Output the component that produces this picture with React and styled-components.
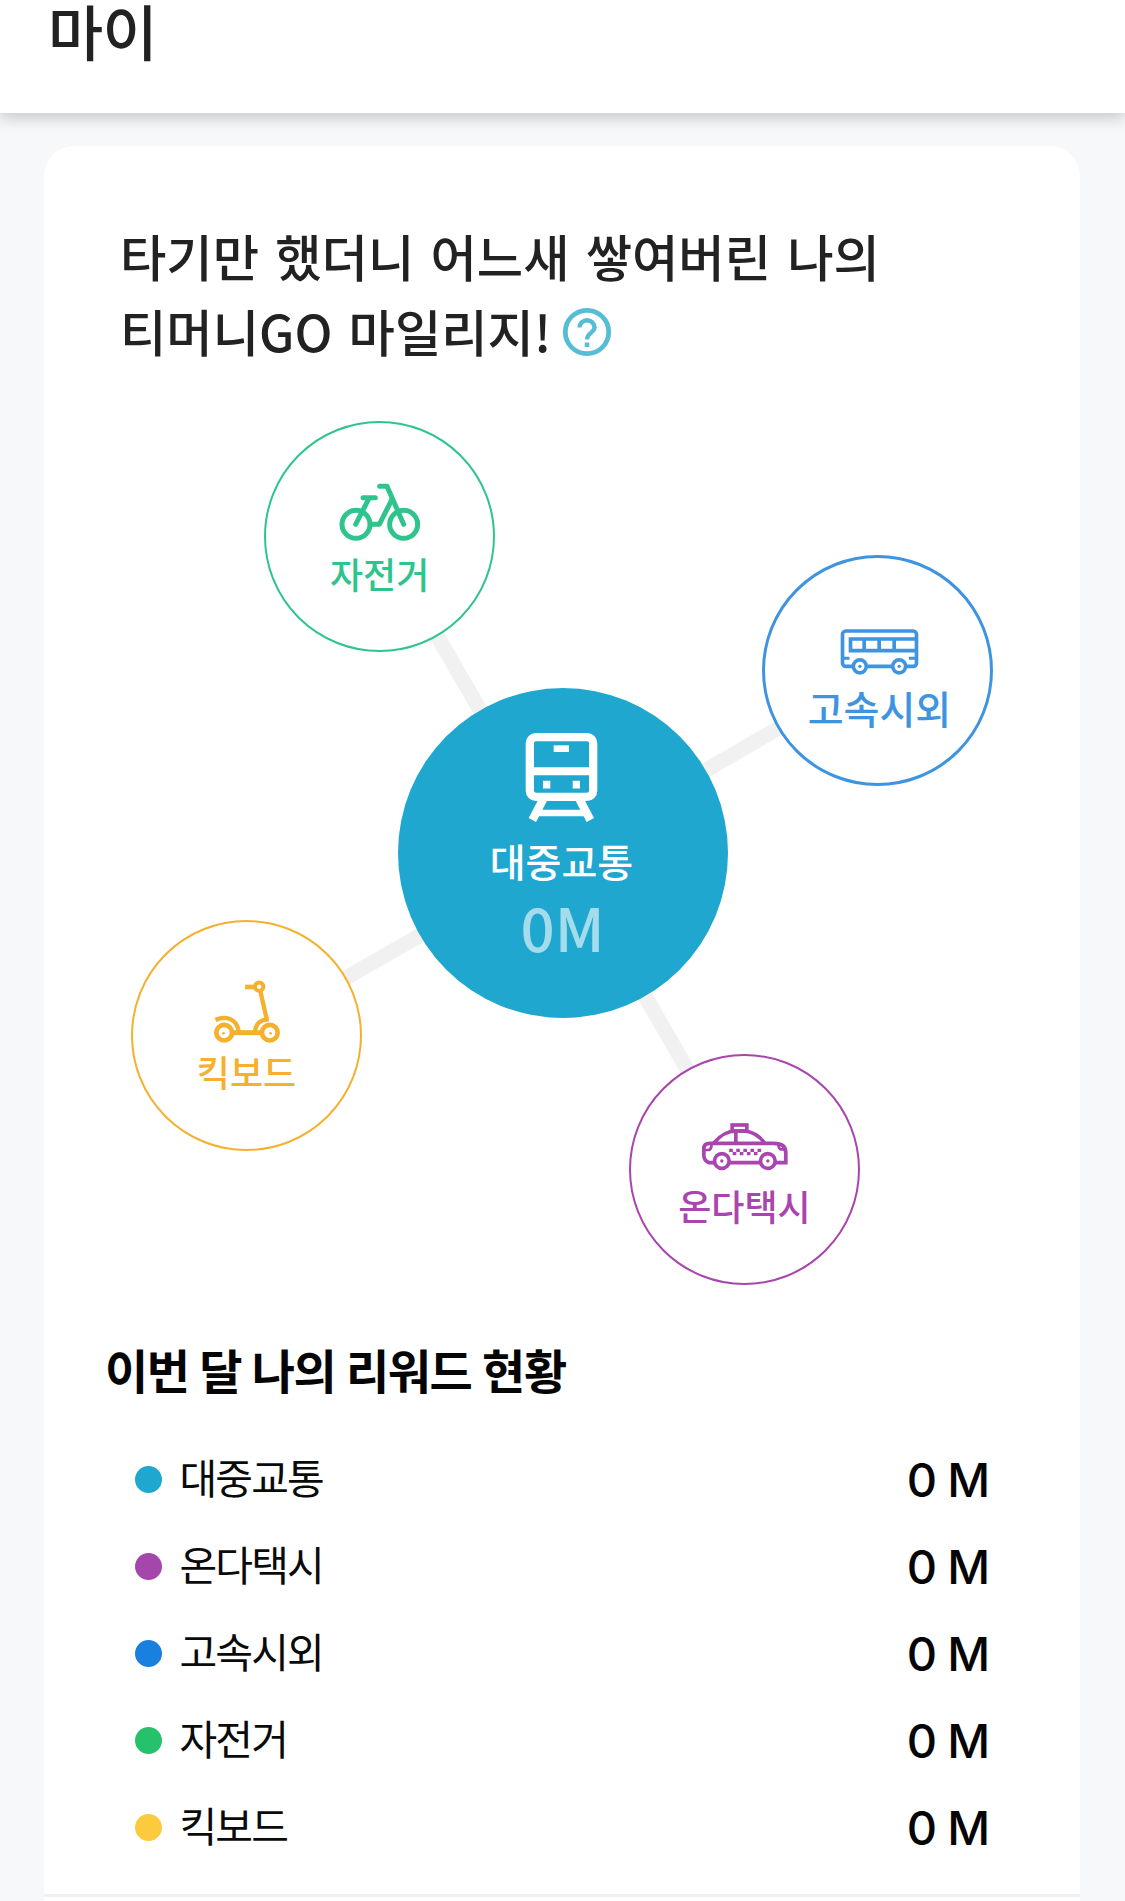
import styled, { createGlobalStyle } from "styled-components";

const GlobalStyle = createGlobalStyle`
  * {
    box-sizing: border-box;
  }

  body {
    margin: 0;
    background: #f6f8fa;
    font-family: "Noto Sans CJK KR", "Noto Sans", sans-serif;
  }
`;

const PageWrapper = styled.div`
  width: 1125px;
  height: 1901px;
  display: flex;
  flex-direction: column;
  overflow: hidden;
  background: #f6f8fa;
`;

const Header = styled.header`
  flex: none;
  height: 113px;
  padding-left: 48px;
  background: #ffffff;
  box-shadow: 0 6px 14px rgba(0, 0, 0, 0.18);
`;

const HeaderTitle = styled.h1`
  margin: 0;
  font-weight: 500;
  font-size: 60px;
  line-height: 59px;
  letter-spacing: -0.01em;
  color: #222222;
`;

const Card = styled.main`
  flex: 1;
  margin: 33px 45px 0 44px;
  padding-top: 72px;
  border-radius: 30px 30px 0 0;
  background: #ffffff;
`;

const Intro = styled.p`
  margin: 0;
  padding-left: 76px;
  font-weight: 500;
  font-size: 50.4px;
  line-height: 75px;
  word-spacing: 4.8px;
  color: #222222;
`;

const IntroLine = styled.span`
  display: flex;
  align-items: center;
  height: 75px;
  white-space: pre;
`;

const HelpIcon = styled.svg`
  width: 50px;
  height: 50px;
  margin: 3px 0 0 11px;
`;

const Diagram = styled.section`
  position: relative;
  height: 971px;
`;

const Links = styled.svg`
  display: block;
  width: 100%;
  height: 100%;
`;

const Node = styled.div`
  position: absolute;
  left: ${(props) => props.$x - 115.5}px;
  top: ${(props) => props.$y - 115.5}px;
  width: 231px;
  height: 231px;
  display: flex;
  flex-direction: column;
  align-items: center;
  padding-top: ${(props) => 60 - props.$line}px;
  border: ${(props) => props.$line}px solid ${(props) => props.$color};
  border-radius: 50%;
  background: #ffffff;
  color: ${(props) => props.$color};
`;

const NodeIcon = styled.svg`
  flex: none;
  width: 86.67px;
  height: 63.33px;
  fill: none;
  stroke: currentColor;
`;

const NodeLabel = styled.span`
  margin-top: ${(props) => (props.$indent ? 7 : 6)}px;
  padding-left: ${(props) => props.$indent || 0}px;
  font-weight: 500;
  font-size: ${(props) => props.$size}px;
  line-height: 44px;
  white-space: nowrap;
`;

const MainNode = styled.div`
  position: absolute;
  left: 354px;
  top: 320px;
  width: 330px;
  height: 330px;
  display: flex;
  flex-direction: column;
  align-items: center;
  padding-top: 42px;
  border-radius: 50%;
  background: #1fa7d0;
  color: #ffffff;
`;

const TrainIcon = styled.svg`
  flex: none;
  width: 80px;
  height: 94px;
  fill: none;
  stroke: currentColor;
`;

const MainLabel = styled.span`
  margin: 14px 3px 0 0;
  font-weight: 500;
  font-size: 39px;
  line-height: 44px;
`;

const MainValue = styled.span`
  margin: 12px 1px 0 0;
  font-weight: 500;
  font-size: 60px;
  line-height: 64px;
  color: #a5dcec;
`;

const RewardTitle = styled.h2`
  margin: 0;
  padding-left: 61px;
  font-weight: 700;
  font-size: 47px;
  line-height: 60px;
  letter-spacing: -0.031em;
  word-spacing: 1.5px;
  color: #050505;
`;

const RewardList = styled.ul`
  margin: 0;
  padding: 37px 91px 23px 91px;
  list-style: none;
  border-bottom: 3px solid #eeeff1;
`;

const RewardItem = styled.li`
  display: flex;
  align-items: center;
  height: 87px;
`;

const Dot = styled.i`
  width: 27px;
  height: 27px;
  border-radius: 50%;
  background: ${(props) => props.$color};
`;

const RewardName = styled.span`
  flex: 1;
  margin-left: 17.5px;
  padding-bottom: 7px;
  font-size: 41px;
  line-height: 50px;
  letter-spacing: -0.045em;
  color: #0a0a0a;
`;

const RewardValue = styled.span`
  font-family: Inter, "Noto Sans", sans-serif;
  font-weight: 500;
  font-size: 47px;
  line-height: 50px;
  letter-spacing: -1.2px;
  color: #050505;
`;

const center = { x: 519, y: 485.3 };

const nodes = [
  { name: "자전거", x: 335.7, y: 168.7, color: "#2fc48d", line: 2, size: 36 },
  { name: "고속시외", x: 833.5, y: 302.5, color: "#3f94df", line: 3, size: 39, indent: 4 },
  { name: "킥보드", x: 202.5, y: 667, color: "#f5b02e", line: 2, size: 36 },
  { name: "온다택시", x: 700.5, y: 801, color: "#a845ae", line: 2, size: 36 },
];

const rewards = [
  { name: "대중교통", mileage: 0, color: "#1fa7d0" },
  { name: "온다택시", mileage: 0, color: "#a546ac" },
  { name: "고속시외", mileage: 0, color: "#1a80e0" },
  { name: "자전거", mileage: 0, color: "#25c26b" },
  { name: "킥보드", mileage: 0, color: "#fcca3d" },
];

function BikeIcon() {
  return (
    <NodeIcon
      viewBox="244 213 260 190"
      strokeWidth="15"
      strokeLinecap="round"
      strokeLinejoin="round"
    >
      <circle cx="304" cy="343" r="42" />
      <circle cx="447" cy="343" r="42" />
      <path d="M325 263H362M343 265L303 343" />
      <path d="M375 229H397L447 343" />
      <path d="M348 343H374L412 268" />
    </NodeIcon>
  );
}

function BusIcon() {
  return (
    <NodeIcon viewBox="252.5 210 260 190" strokeWidth="11">
      <rect x="278" y="258" width="222" height="106" rx="10" />
      <path d="M500 282H302V317H500M343 282V317M388 282V317M433 282V317" />
      <path d="M280 340H299M477 340H500" strokeWidth="9" />
      <circle cx="330" cy="364" r="19.5" fill="#ffffff" />
      <circle cx="448" cy="364" r="19.5" fill="#ffffff" />
      <circle cx="330" cy="364" r="5" fill="currentColor" stroke="none" />
      <circle cx="448" cy="364" r="5" fill="currentColor" stroke="none" />
    </NodeIcon>
  );
}

function ScooterIcon() {
  return (
    <NodeIcon viewBox="234.5 209 260 190" strokeWidth="13">
      <circle cx="403" cy="229" r="12.5" strokeWidth="12" />
      <path d="M361 230H391" strokeWidth="14" />
      <path d="M407 244L426 328" />
      <path d="M272 329C300 316 336 322 342 364" />
      <path d="M391 364C392 340 408 326 432 328" />
      <path d="M322 367H412" strokeWidth="15" />
      <circle cx="298" cy="367" r="23.5" fill="#ffffff" strokeWidth="14" />
      <circle cx="435" cy="367" r="23.5" fill="#ffffff" strokeWidth="14" />
      <circle cx="296" cy="369" r="4" fill="currentColor" stroke="none" />
      <circle cx="437" cy="369" r="4" fill="currentColor" stroke="none" />
    </NodeIcon>
  );
}

function TaxiIcon() {
  return (
    <NodeIcon viewBox="243.5 206 260 190" strokeWidth="11">
      <path d="M284 352H268Q252 347 252 330V310Q252 294 270 294H462Q498 294 498 322V352H466M422 352H328" />
      <path d="M282 293Q312 257 348 257H376Q412 262 434 293M348 257V293" />
      <rect x="337" y="239" width="44" height="18" />
      <path d="M254 314H268Q276 310 275 296M498 312H482Q475 308 476 296" strokeWidth="8" />
      <circle cx="306" cy="347" r="22" fill="#ffffff" />
      <circle cx="444" cy="347" r="22" fill="#ffffff" />
      <circle cx="306" cy="347" r="5" fill="currentColor" stroke="none" />
      <circle cx="444" cy="347" r="5" fill="currentColor" stroke="none" />
      <path d="M328 315H424" strokeWidth="10" strokeDasharray="11 10.25" />
      <path d="M338.5 325H416" strokeWidth="10" strokeDasharray="11 10.25" />
    </NodeIcon>
  );
}

const icons = {
  자전거: BikeIcon,
  고속시외: BusIcon,
  킥보드: ScooterIcon,
  온다택시: TaxiIcon,
};

function MileageDiagram() {
  return (
    <Diagram>
      <Links>
        {nodes.map((node) => (
          <line
            key={node.name}
            x1={center.x}
            y1={center.y}
            x2={node.x}
            y2={node.y}
            stroke="#f1f1f2"
            strokeWidth="15"
          />
        ))}
      </Links>
      {nodes.map((node) => {
        const Icon = icons[node.name];
        return (
          <Node
            key={node.name}
            $x={node.x}
            $y={node.y}
            $line={node.line}
            $color={node.color}
          >
            <Icon />
            <NodeLabel $size={node.size} $indent={node.indent}>
              {node.name}
            </NodeLabel>
          </Node>
        );
      })}
      <MainNode>
        <TrainIcon viewBox="399 150 240 282">
          <rect x="419.5" y="171.5" width="190" height="179" rx="18" strokeWidth="25" />
          <path d="M420 274H610" strokeWidth="24" />
          <path d="M491 206H537" strokeWidth="20" />
          <path d="M459 314H481M548 314H570" strokeWidth="23" />
          <path d="M461 355L427 420M567 355L601 420" strokeWidth="25" />
          <path d="M440 399H588" strokeWidth="19" />
        </TrainIcon>
        <MainLabel>대중교통</MainLabel>
        <MainValue>0M</MainValue>
      </MainNode>
    </Diagram>
  );
}

function App() {
  return (
    <PageWrapper>
      <GlobalStyle />
      <Header>
        <HeaderTitle>마이</HeaderTitle>
      </Header>
      <Card>
        <Intro>
          <IntroLine>타기만 했더니 어느새 쌓여버린 나의</IntroLine>
          <IntroLine>
            티머니GO 마일리지!
            <HelpIcon viewBox="0 0 50 50" fill="none" stroke="#56bdd5">
              <circle cx="25" cy="25" r="21.7" strokeWidth="4.8" />
              <path d="M17.5 20.5A7.5 7.3 0 0 1 32.5 20.5C32.5 25.5 25 26 25 32.5" strokeWidth="4.4" />
              <path d="M25 35.5V40" strokeWidth="4.6" />
            </HelpIcon>
          </IntroLine>
        </Intro>
        <MileageDiagram />
        <RewardTitle>이번 달 나의 리워드 현황</RewardTitle>
        <RewardList>
          {rewards.map((item) => (
            <RewardItem key={item.name}>
              <Dot $color={item.color} />
              <RewardName>{item.name}</RewardName>
              <RewardValue>{item.mileage} M</RewardValue>
            </RewardItem>
          ))}
        </RewardList>
      </Card>
    </PageWrapper>
  );
}

export default App;
